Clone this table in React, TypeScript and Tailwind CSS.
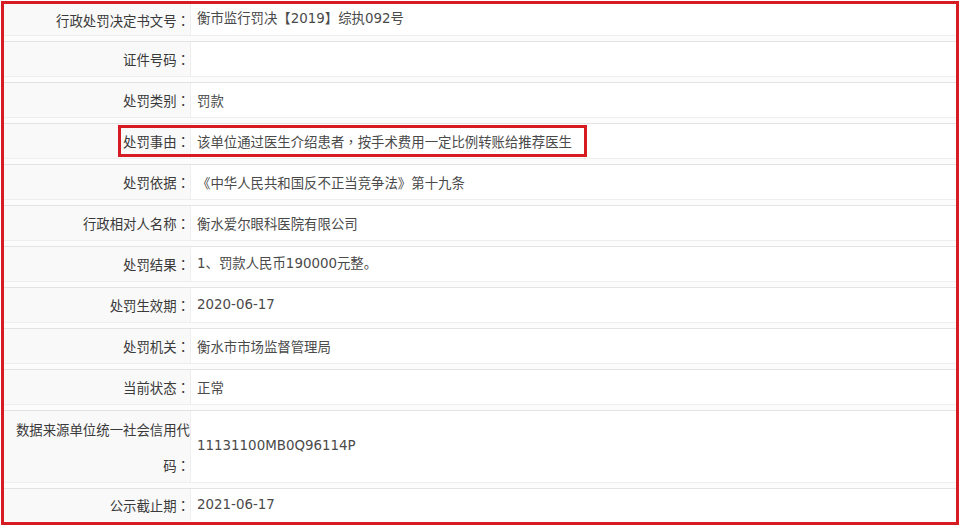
const rows: { label: string; value: string; h: string; cjk?: boolean }[] = [
  { label: "行政处罚决定书文号", value: "衡市监行罚决【2019】综执092号", h: "h-[31px]" },
  { label: "证件号码", value: "", h: "h-[34px]" },
  { label: "处罚类别", value: "罚款", h: "h-[34px]", cjk: true },
  { label: "处罚事由", value: "", h: "h-[34px]", cjk: true },
  { label: "处罚依据", value: "《中华人民共和国反不正当竞争法》第十九条", h: "h-[34px]", cjk: true },
  { label: "行政相对人名称", value: "衡水爱尔眼科医院有限公司", h: "h-[34px]", cjk: true },
  { label: "处罚结果", value: "1、罚款人民币190000元整。", h: "h-[34px]" },
  { label: "处罚生效期", value: "2020-06-17", h: "h-[34px]" },
  { label: "处罚机关", value: "衡水市市场监督管理局", h: "h-[34px]", cjk: true },
  { label: "当前状态", value: "正常", h: "h-[34px]", cjk: true },
  { label: "数据来源单位统一社会信用代码", value: "11131100MB0Q96114P", h: "h-[71px]" },
  { label: "公示截止期", value: "2021-06-17", h: "h-[32px]" },
];

const punct = "font-['Noto_Sans_CJK_TC',sans-serif]";

export default function App() {
  return (
    <div className="w-[960px] h-[526px] bg-white pt-[1px] pl-[1px] text-[13.4px] font-['Noto_Sans_CJK_SC',sans-serif]">
      <div className="relative w-[958px] h-[524px] border-[3px] border-[#d61c22] bg-white overflow-hidden">
        {rows.map((row, i) => (
          <div key={row.label}>
            {i > 0 && (
              <div className="h-[7px] border-t border-b border-t-[#eeeeee] border-b-[#e3e3e3] bg-[#fcfcfc]" />
            )}
            <div className={`flex ${row.h}`}>
              <div className="w-[187px] shrink-0 bg-[#f9f9f9] border-r border-[#eeeeee] flex items-center justify-end pl-[8px] text-right text-[#3a3a3a] leading-[36px]">
                <span>
                  {row.label}
                  <span className={punct}>：</span>
                </span>
              </div>
              <div
                className={
                  "flex-1 flex items-center pl-[6px] text-[#4a4a4a] " +
                  (row.cjk
                    ? "font-['Noto_Sans_CJK_SC',sans-serif]"
                    : "font-['DejaVu_Sans','Noto_Sans_CJK_SC',sans-serif]")
                }
              >
                {i === 3 ? (
                  <span>
                    该单位通过医生介绍患者<span className={punct}>，</span>按手术费用一定比例转账给推荐医生
                  </span>
                ) : (
                  row.value
                )}
              </div>
            </div>
          </div>
        ))}
        {/* highlight around 处罚事由 */}
        <div className="absolute left-[114px] top-[121px] w-[469px] h-[32px] border-[3px] border-[#d61c22]" />
      </div>
    </div>
  );
}
